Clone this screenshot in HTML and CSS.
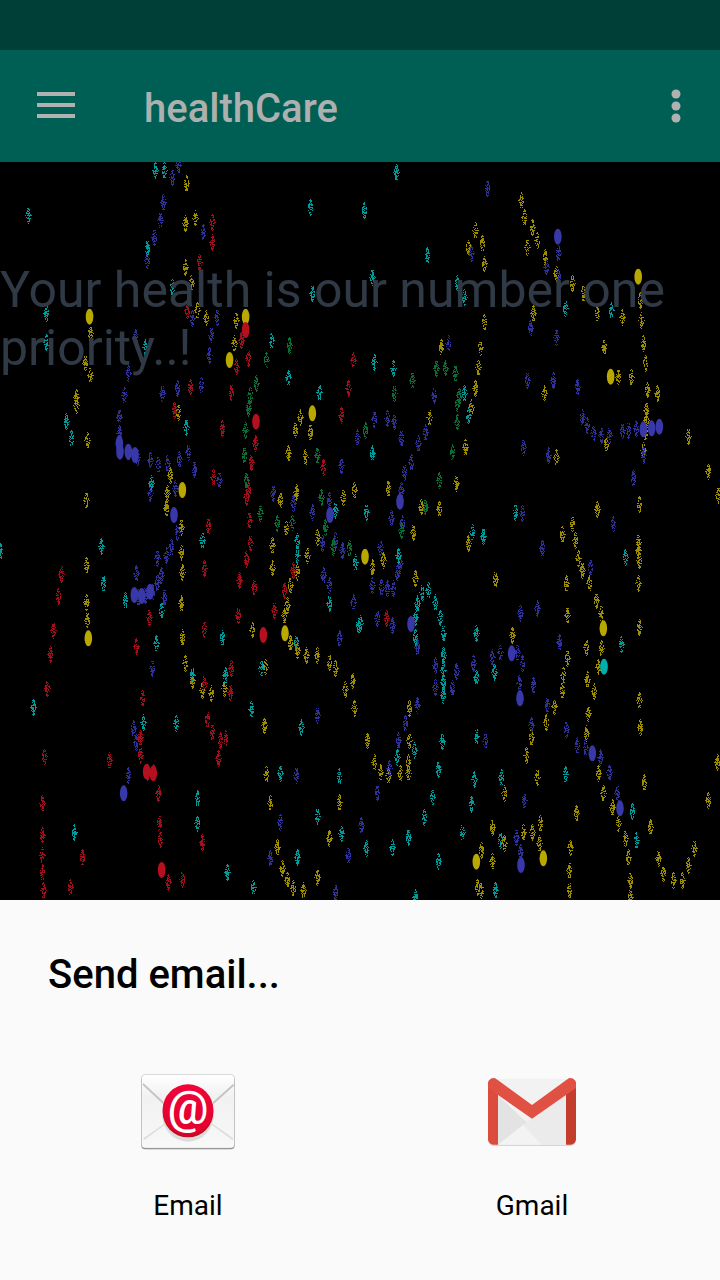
FILE: index.html
```html
<!DOCTYPE html>
<html lang="en">
<head>
    <meta charset="utf-8"/>
    <title>healthCare</title>
    <link rel="stylesheet" href="styles.css">
</head>
<body>
<div id="page">
    <div class="status-bar"></div>
    <div class="app-bar">
        <svg class="menu-icon" viewBox="0 0 38 26"><path d="M0 0h38v4H0zM0 11h38v4H0zM0 22h38v4H0z"/></svg>
        <div class="app-title">healthCare</div>
        <svg class="more-icon" viewBox="0 0 10 34"><circle cx="5" cy="5" r="4.5"/><circle cx="5" cy="17" r="4.5"/><circle cx="5" cy="29" r="4.5"/></svg>
    </div>
    <div class="content">
        <canvas id="specks" width="720" height="738"></canvas>
        <p class="tagline">Your health is our number one priority..!</p>
    </div>
    <div class="sheet">
        <div class="sheet-title">Send email...</div>
        <ul class="apps">
            <li>
                <svg class="app-icon" viewBox="0 0 288 288">
                    <defs>
                        <linearGradient id="envFill" x1="0" y1="0" x2="0" y2="1">
                            <stop offset="0" stop-color="#fff"/>
                            <stop offset="0.3" stop-color="#f1f1f1"/>
                            <stop offset="1" stop-color="#f8f8f8"/>
                        </linearGradient>
                        <linearGradient id="badge" x1="0" y1="0" x2="0" y2="1">
                            <stop offset="0" stop-color="#f0043a"/>
                            <stop offset="1" stop-color="#e2002c"/>
                        </linearGradient>
                    </defs>
                    <rect x="4" y="32" width="280" height="221" rx="12" fill="#858585"/>
                    <rect x="4" y="28" width="280" height="222" rx="12" fill="#cfcfcf"/>
                    <rect x="6" y="30" width="276" height="218" rx="10" fill="url(#envFill)"/>
                    <path d="M10 54 72 112 70 118 8 60zM280 56 218 112 220 118 282 62z" fill="#c4c4c4"/>
                    <path d="M10 220 72 176 74 180 12 226zM280 220 218 176 216 180 278 226z" fill="#dedede"/>
                    <ellipse cx="144" cy="146" rx="78" ry="84" fill="#dcdcdc"/>
                    <circle cx="144" cy="141" r="76" fill="#c20c24"/>
                    <circle cx="144" cy="134" r="76" fill="url(#badge)"/>
                    <text class="at-sign" x="144" y="178">@</text>
                </svg>
                <span class="app-name">Email</span>
            </li>
            <li>
                <svg class="app-icon" viewBox="0 0 288 288">
                    <g transform="translate(0,-5)">
                        <rect x="12" y="50" width="264" height="197" rx="16" fill="#c9c9c9"/>
                        <rect x="12" y="46" width="264" height="198" rx="16" fill="#f2f2f2"/>
                        <path d="M42 96V244H228L120 170z" fill="#e3e3e3"/>
                        <path d="M42 244 118 184 174 244z" fill="#f3f3f3"/>
                        <path d="M246 96V244H174L118 184 144 166z" fill="#ebebeb"/>
                        <path d="M28 46A16 16 0 0 0 12 62V228A16 16 0 0 0 28 244H42V70z" fill="#db4c3f"/>
                        <path d="M260 46A16 16 0 0 1 276 62V228A16 16 0 0 1 260 244H246V70z" fill="#c33d2c"/>
                        <path d="M12 62A16 16 0 0 1 38 48L144 125 250 48A16 16 0 0 1 276 62V74L144 166 12 74z" fill="#e05043"/>
                    </g>
                </svg>
                <span class="app-name">Gmail</span>
            </li>
        </ul>
    </div>
</div>
<script src="specks.js"></script>
</body>
</html>
```

FILE: styles.css
```css
* {
    padding: 0;
    margin: 0;
    border: none;
    list-style: none;
}
body {
    background: #000;
    font-family: Roboto, "Liberation Sans", sans-serif;
}
#page {
    width: 720px;
    height: 1280px;
    display: flex;
    flex-direction: column;
    overflow: hidden;
}
.status-bar {
    height: 50px;
    background: #003f38;
}
.app-bar {
    height: 112px;
    display: flex;
    align-items: center;
    background: #005f55;
    color: #adb0af;
}
.menu-icon {
    width: 38px;
    height: 26px;
    margin: -2px 0 0 37px;
    fill: #b0b2b1;
}
.app-title {
    flex: 1;
    margin: 4px 0 0 69px;
    font-size: 40px;
    font-weight: 500;
}
.more-icon {
    width: 10px;
    height: 34px;
    margin: -1px 39px 0 0;
    fill: #b0b2b1;
}
.content {
    flex: 1;
    position: relative;
    padding-top: 99px;
    background: #000;
}
#specks {
    position: absolute;
    top: 0;
    left: 0;
}
.tagline {
    position: relative;
    font-size: 50px;
    line-height: 58px;
    color: #2f3a46;
}
.sheet {
    height: 380px;
    background: #fafafa;
}
.sheet-title {
    padding: 50px 0 0 48px;
    font-size: 40px;
    line-height: 50px;
    font-weight: 500;
    color: #000;
}
.apps {
    display: flex;
    padding: 65px 16px 0;
}
.apps li {
    width: 344px;
    display: flex;
    flex-direction: column;
    align-items: center;
}
.app-icon {
    width: 96px;
    height: 96px;
}
.app-name {
    margin-top: 28px;
    font-size: 28px;
    line-height: 34px;
    color: #000;
}
.at-sign {
    font-family: Roboto, sans-serif;
    font-size: 136px;
    font-weight: 500;
    fill: #fff;
    text-anchor: middle;
}
```

FILE: specks.js
```js
// speck positions were read off zoomed crops, so each block keeps its own origin and scale
var blocks = [
    {ox: 0, oy: 0, sx: 1 / 2.178, sy: 1 / 3,
     cyan: [62,645,338,510,357,510,862,515,675,620,792,630,930,765,320,745,810,830,995,850,1010,890,1230,925,1330,930,100,940,375,860,680,880,100,1025,315,1040,590,1020,628,1130,815,1085,855,1105,695,1175,1010,1180],
     yellow: [405,550,1135,600,1142,650,1158,680,1170,720,1147,740,1188,770,1035,690,1050,730,1055,790,1020,740,425,655,402,670,402,800,415,850,428,930,448,955,195,1000,185,1090,197,1125,515,960,510,1030,1210,820,1245,850,1270,880,1300,940,1395,900,1397,960,1400,1030,1405,1090,1410,1170,1315,1040,1345,1130,1375,1130,1430,1180,1160,940,1055,965,1045,1040,1042,1100,1035,1165,960,1040,1185,1180,1355,950,165,1190],
     blue: [1060,565,1215,760,1190,800,1025,760,355,605,375,530,388,495,348,660,335,710,320,780,443,695,472,950,418,955,295,1010,460,1005,455,1065,278,1120,1155,985,1210,1010,1147,1140,1205,1140,1257,1160,975,1030,270,1185,352,1180,385,1165,438,1155,1215,830,945,1185],
     red: [462,665,462,725,433,785,525,1020,540,1075,513,1100,768,1080,757,1165,413,1160,503,1175,408,930],
     green: [630,1035,580,1080,950,1105,970,1105,990,1120,897,1140,558,1150,545,1185,858,1180,1000,1185],
     blobs: ['yellow',195,950,'yellow',535,950,'yellow',500,1080,'yellow',1390,830,'yellow',1330,1130,'blue',1215,710,'red',535,990]},
    {ox: 0, oy: 400, sx: 1 / 3, sy: 1 / 3,
     yellow: [228,15,262,120,258,300,258,495,257,605,262,660,535,35,510,225,500,280,497,325,543,380,542,455,545,515,542,610,545,710,555,790,577,840,607,870,633,880,672,865,757,690,795,800,817,435,817,505,865,160,916,170,900,50,885,90,930,95,840,300,888,275,1030,290,1062,270,858,385,950,410,920,465,890,515,870,555,862,615,852,645,870,730,890,750,918,765,950,765,988,785,1005,805,1057,840,1035,868,1062,925,792,975,797,1122,810,1210,1018,1207,987,1315,832,1340,845,1405,862,1440,878,1465,910,1470,950,1430],
     blue: [358,50,356,100,385,155,412,170,450,180,473,192,500,190,537,178,563,157,583,208,658,240,525,265,530,395,512,440,498,465,470,475,483,525,470,550,455,575,435,585,415,590,407,518,492,590,450,280,455,803,398,985,407,1025,385,1125,840,1265,888,1125,810,1375,950,945,1043,1365,1005,1475,1018,715,1060,605,988,555,968,525,965,430,1005,420,1027,450,937,335,1022,195,820,280,878,310,1070,110,988,300],
     cyan: [199,62,212,115,558,80,453,250,302,437,308,550,375,600,482,630,605,420,467,730,667,712,675,825,782,805,577,825,99,920,428,965,529,968,753,928,902,982,841,1118,1018,1127,591,1195,590,1270,222,1295,680,1415,759,1460,952,1248,1023,1300,890,1370,890,420,890,465,988,610,1005,330,1065,485,1075,675,888,730,0,452],
     red: [522,30,665,85,1024,45,765,130,752,185,970,200,640,230,745,270,738,290,748,360,623,378,750,430,738,478,612,503,716,540,763,560,853,570,878,510,822,630,715,645,612,688,448,650,408,738,182,523,173,587,160,690,150,762,141,865,427,893,693,803,612,850,690,875,620,958,637,995,660,1020,675,1015,653,1075,420,1010,420,1065,440,1115,460,1115,473,1180,133,1068,328,1080,127,1210,127,1305,125,1365,127,1415,128,1470,247,1372,211,1462,478,1268,480,1318,605,1325,505,1445,545,1438],
     green: [745,25,735,90,733,165,738,240,780,338,830,370,877,365,962,292,950,165,1000,440,1048,445,975,380],
     blobs: ['blue',358,130,'blue',360,155,'blue',385,155,'blue',405,165,'blue',522,345,'blue',403,585,'blue',425,588,'blue',450,575,'blue',371,1180,'blue',990,345,'yellow',547,270,'yellow',937,40,'yellow',855,700,'yellow',265,715,'red',768,65,'red',790,705,'red',485,1410,'red',440,1115,'red',460,1120]},
    {ox: 360, oy: 400, sx: 1 / 3, sy: 1 / 3,
     blue: [42,58,80,55,103,62,122,115,195,95,173,130,152,185,133,215,122,270,92,355,125,370,60,440,120,490,110,520,100,565,80,565,63,560,35,555,50,655,97,675,170,740,225,795,225,860,275,865,288,812,338,790,395,770,420,755,470,755,487,790,477,850,520,855,480,640,530,625,597,725,565,165,490,140,667,50,682,75,700,100,722,105,748,105,785,90,803,90,827,85,850,165,820,235,758,370,545,445,485,340,690,500,560,915,513,975,617,988,652,1035,675,1040,720,1070,748,1115,770,1180,135,968,115,1020,172,915,375,1022,87,1105,52,1175,492,1200,3,1275,468,1310,480,1355],
     yellow: [858,30,858,60,855,95,738,130,848,150,983,108,208,50,333,20,315,140,587,172,1045,212,1075,285,837,312,710,328,85,265,182,320,237,327,160,397,287,248,605,403,325,430,637,370,645,420,655,475,665,510,687,550,708,600,722,640,722,745,715,800,835,425,835,450,837,480,835,550,837,680,618,550,620,645,677,740,620,775,610,825,605,870,680,838,703,873,838,900,683,940,840,980,678,1000,583,918,558,965,512,1010,497,1065,455,705,405,537,165,533,37,500,70,480,148,925,147,1020,145,1085,145,1120,120,1120,85,1125,60,1115,42,1085,22,1020,532,1130,714,1120,730,1180,757,1222,775,1270,795,1315,803,1370,853,1145,1070,1085,1045,1200,870,1280,893,1375,910,1420,940,1440,965,1440,985,1395,1003,1345,648,1238,630,1340,627,1410,627,1470,810,1440,810,1490,540,1270,517,1295,490,1295,537,1330,432,1330,395,1280,395,1382,362,1350,350,1460,362,1470,433,1180],
     cyan: [18,335,37,160,115,465,325,45,465,335,337,397,368,408,795,470,782,732,348,700,403,815,348,830,248,700,248,765,248,810,248,845,248,885,240,650,225,605,205,570,185,575,172,610,165,650,165,710,110,1070,162,1050,247,1022,348,1008,235,1108,343,1137,422,1132,615,1122,215,1192,332,1212,192,1250,143,1312,95,1340,18,1345,307,1297,420,1320,235,1383,405,1470,817,1232,827,1320,0,670,165,1490],
     green: [15,90,292,65,275,155,238,240,122,390,290,10,195,320],
     red: [78,655],
     blobs: ['blue',120,305,'blue',153,672,'blue',455,760,'blue',480,895,'blue',850,88,'blue',875,85,'blue',898,80,'blue',697,1060,'blue',780,1225,'blue',483,1395,'yellow',730,685,'yellow',15,470,'yellow',550,1375,'yellow',349,1385,'cyan',732,800]}
];
var colors = {yellow: "#9c8e00", blue: "#30309a", cyan: "#009a9a", red: "#a30e1c", green: "#0a6e37"};
var blobColors = {yellow: "#b9a800", blue: "#3838a8", cyan: "#00b0b0", red: "#b4101f"};
var canvas = document.getElementById("specks");
var ctx = canvas.getContext("2d");
var seed = 7;
var TOP = 162;

function rnd() {
    seed = (seed * 16807) % 2147483647;
    return seed / 2147483647;
}
// one speck is a small upright diamond with holes in it
function speck(x, y) {
    for (var r = -8; r <= 8; r++) {
        var half = 2.6 * (1 - Math.abs(r) / 9);
        for (var c = -Math.round(half); c <= Math.round(half); c++) {
            if (rnd() < 0.58) {
                ctx.fillRect(Math.round(x) + c, Math.round(y) + r, 1, 1);
            }
        }
    }
}
function blob(x, y) {
    ctx.beginPath();
    ctx.ellipse(x, y, 3.8, 8, 0, 0, Math.PI * 2);
    ctx.fill();
}
blocks.forEach(function (b) {
    Object.keys(colors).forEach(function (name) {
        var pts = b[name] || [];
        ctx.fillStyle = colors[name];
        for (var i = 0; i < pts.length; i += 2) {
            speck(b.ox + pts[i] * b.sx, b.oy + pts[i + 1] * b.sy - TOP);
        }
    });
    for (var i = 0; i < b.blobs.length; i += 3) {
        ctx.fillStyle = blobColors[b.blobs[i]];
        blob(b.ox + b.blobs[i + 1] * b.sx, b.oy + b.blobs[i + 2] * b.sy - TOP);
    }
});
```
